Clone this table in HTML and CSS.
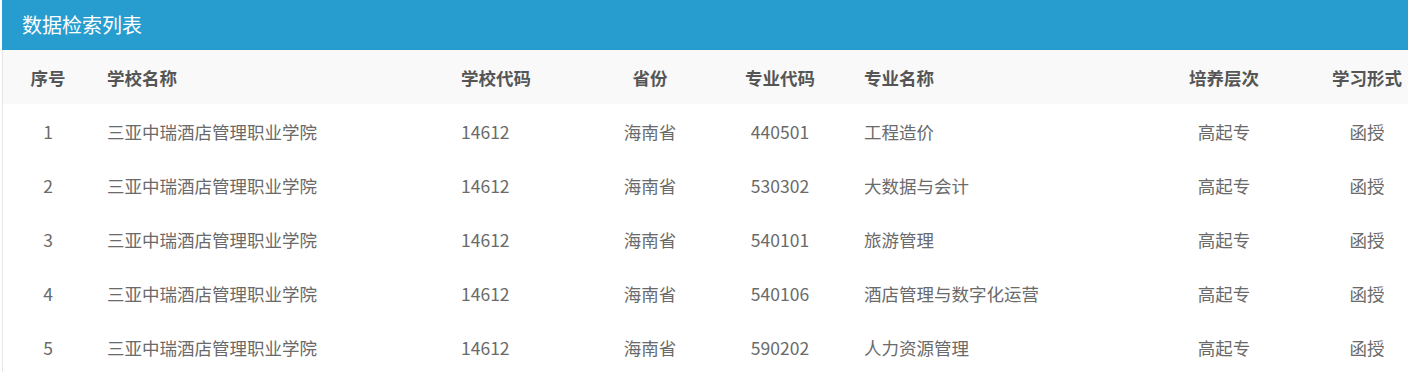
FILE: index.html
```html
<!DOCTYPE html>
<html lang="zh-CN">
<head>
<meta charset="utf-8">
<title>数据检索列表</title>
<link rel="stylesheet" href="styles.css">
</head>
<body>
<div class="panel">
  <div class="panel-title">数据检索列表</div>
  <div class="panel-body">
    <div class="grid head">
      <div class="c c1">序号</div>
      <div class="c c2">学校名称</div>
      <div class="c c3">学校代码</div>
      <div class="c c4">省份</div>
      <div class="c c5">专业代码</div>
      <div class="c c6">专业名称</div>
      <div class="c c7">培养层次</div>
      <div class="c c8">学习形式</div>
    </div>
    <div class="grid row">
      <div class="c c1">1</div>
      <div class="c c2">三亚中瑞酒店管理职业学院</div>
      <div class="c c3">14612</div>
      <div class="c c4">海南省</div>
      <div class="c c5">440501</div>
      <div class="c c6">工程造价</div>
      <div class="c c7">高起专</div>
      <div class="c c8">函授</div>
    </div>
    <div class="grid row">
      <div class="c c1">2</div>
      <div class="c c2">三亚中瑞酒店管理职业学院</div>
      <div class="c c3">14612</div>
      <div class="c c4">海南省</div>
      <div class="c c5">530302</div>
      <div class="c c6">大数据与会计</div>
      <div class="c c7">高起专</div>
      <div class="c c8">函授</div>
    </div>
    <div class="grid row">
      <div class="c c1">3</div>
      <div class="c c2">三亚中瑞酒店管理职业学院</div>
      <div class="c c3">14612</div>
      <div class="c c4">海南省</div>
      <div class="c c5">540101</div>
      <div class="c c6">旅游管理</div>
      <div class="c c7">高起专</div>
      <div class="c c8">函授</div>
    </div>
    <div class="grid row">
      <div class="c c1">4</div>
      <div class="c c2">三亚中瑞酒店管理职业学院</div>
      <div class="c c3">14612</div>
      <div class="c c4">海南省</div>
      <div class="c c5">540106</div>
      <div class="c c6">酒店管理与数字化运营</div>
      <div class="c c7">高起专</div>
      <div class="c c8">函授</div>
    </div>
    <div class="grid row">
      <div class="c c1">5</div>
      <div class="c c2">三亚中瑞酒店管理职业学院</div>
      <div class="c c3">14612</div>
      <div class="c c4">海南省</div>
      <div class="c c5">590202</div>
      <div class="c c6">人力资源管理</div>
      <div class="c c7">高起专</div>
      <div class="c c8">函授</div>
    </div>
  </div>
</div>
</body>
</html>
```

FILE: styles.css
```css
html, body {
  margin: 0;
  padding: 0;
  background: #ffffff;
  overflow: hidden;
}
body {
  font-family: "Noto Sans CJK SC", "Noto Sans", sans-serif;
  color: #6a6a6a;
}
.panel {
  margin-left: 2px;
}
.panel-title {
  height: 50px;
  background: #279ccf;
  color: #ffffff;
  font-size: 20px;
  line-height: 50px;
  padding-left: 20px;
}
.panel-body {
  border-left: 1px solid #e6e6e6;
  overflow: hidden;
}
.grid {
  display: grid;
  grid-template-columns: 90px 354px 133px 140px 120px 308px 152px 134px;
  width: 1431px;
  height: 54px;
  align-items: center;
  font-size: 17.5px;
}
.head {
  background: #f9f9f9;
  font-weight: bold;
  color: #555555;
}
.c {
  white-space: nowrap;
}
.c1, .c4, .c5, .c7, .c8 {
  text-align: center;
}
.c2, .c3 {
  padding-left: 14px;
}
.c6 {
  padding-left: 24px;
}
```
